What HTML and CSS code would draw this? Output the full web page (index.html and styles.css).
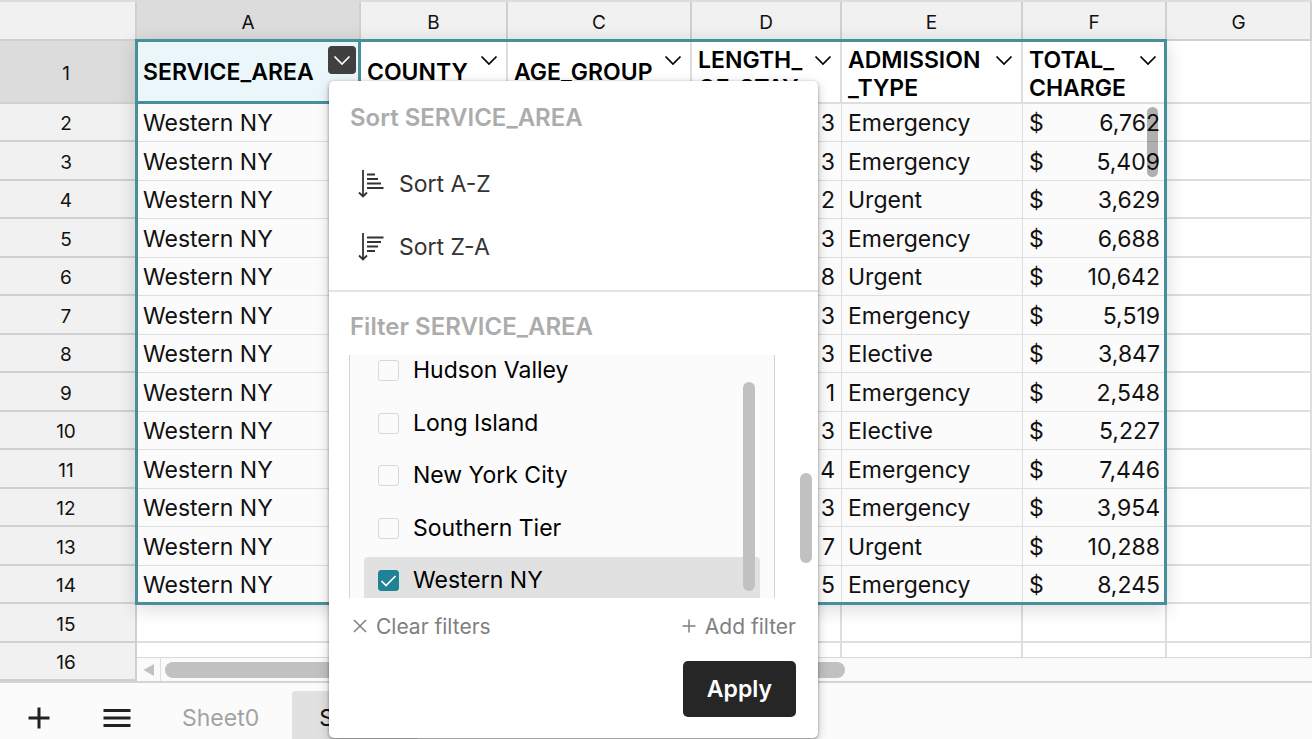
FILE: index.html
```html
<!DOCTYPE html>
<html lang="en">
<head>
    <meta charset="UTF-8">
    <meta name="viewport" content="width=device-width, initial-scale=1.0">
    <title>Hospital charges</title>
    <link rel="stylesheet" href="styles.css">
</head>
<body>
    <svg class="sprite" aria-hidden="true">
        <symbol id="chevron" viewBox="0 0 28 28">
            <path d="M6.5 10.5 L14 18 L21.5 10.5" fill="none" stroke="currentColor" stroke-width="1.7"/>
        </symbol>
    </svg>

    <div class="app">
        <main class="sheet">
            <table class="grid">
                <colgroup>
                    <col class="col-num"><col class="col-a"><col class="col-b"><col class="col-c">
                    <col class="col-d"><col class="col-e"><col class="col-f"><col>
                </colgroup>
                <thead>
                    <tr>
                        <th></th><th class="current">A</th><th>B</th><th>C</th><th>D</th><th>E</th><th>F</th><th>G</th>
                    </tr>
                </thead>
                <tbody>
                    <tr class="fields">
                        <th class="current">1</th>
                        <td class="active">SERVICE_AREA<button class="drop open" aria-label="Filter SERVICE_AREA"><svg><use href="#chevron"/></svg></button></td>
                        <td>COUNTY<button class="drop" aria-label="Filter COUNTY"><svg><use href="#chevron"/></svg></button></td>
                        <td>AGE_GROUP<button class="drop" aria-label="Filter AGE_GROUP"><svg><use href="#chevron"/></svg></button></td>
                        <td class="wrapped">LENGTH_<br>OF_STAY<button class="drop" aria-label="Filter LENGTH_OF_STAY"><svg><use href="#chevron"/></svg></button></td>
                        <td class="wrapped">ADMISSION<br>_TYPE<button class="drop" aria-label="Filter ADMISSION_TYPE"><svg><use href="#chevron"/></svg></button></td>
                        <td class="wrapped">TOTAL_<br>CHARGE<button class="drop" aria-label="Filter TOTAL_CHARGE"><svg><use href="#chevron"/></svg></button></td>
                        <td></td>
                    </tr>
                    <tr class="data"><th>2</th><td>Western NY</td><td></td><td></td><td class="num">3</td><td>Emergency</td><td><div class="money"><span>$</span><span>6,762</span></div></td><td></td></tr>
                    <tr class="data"><th>3</th><td>Western NY</td><td></td><td></td><td class="num">3</td><td>Emergency</td><td><div class="money"><span>$</span><span>5,409</span></div></td><td></td></tr>
                    <tr class="data"><th>4</th><td>Western NY</td><td></td><td></td><td class="num">2</td><td>Urgent</td><td><div class="money"><span>$</span><span>3,629</span></div></td><td></td></tr>
                    <tr class="data"><th>5</th><td>Western NY</td><td></td><td></td><td class="num">3</td><td>Emergency</td><td><div class="money"><span>$</span><span>6,688</span></div></td><td></td></tr>
                    <tr class="data"><th>6</th><td>Western NY</td><td></td><td></td><td class="num">8</td><td>Urgent</td><td><div class="money"><span>$</span><span>10,642</span></div></td><td></td></tr>
                    <tr class="data"><th>7</th><td>Western NY</td><td></td><td></td><td class="num">3</td><td>Emergency</td><td><div class="money"><span>$</span><span>5,519</span></div></td><td></td></tr>
                    <tr class="data"><th>8</th><td>Western NY</td><td></td><td></td><td class="num">3</td><td>Elective</td><td><div class="money"><span>$</span><span>3,847</span></div></td><td></td></tr>
                    <tr class="data"><th>9</th><td>Western NY</td><td></td><td></td><td class="num">1</td><td>Emergency</td><td><div class="money"><span>$</span><span>2,548</span></div></td><td></td></tr>
                    <tr class="data"><th>10</th><td>Western NY</td><td></td><td></td><td class="num">3</td><td>Elective</td><td><div class="money"><span>$</span><span>5,227</span></div></td><td></td></tr>
                    <tr class="data"><th>11</th><td>Western NY</td><td></td><td></td><td class="num">4</td><td>Emergency</td><td><div class="money"><span>$</span><span>7,446</span></div></td><td></td></tr>
                    <tr class="data"><th>12</th><td>Western NY</td><td></td><td></td><td class="num">3</td><td>Emergency</td><td><div class="money"><span>$</span><span>3,954</span></div></td><td></td></tr>
                    <tr class="data"><th>13</th><td>Western NY</td><td></td><td></td><td class="num">7</td><td>Urgent</td><td><div class="money"><span>$</span><span>10,288</span></div></td><td></td></tr>
                    <tr class="data"><th>14</th><td>Western NY</td><td></td><td></td><td class="num">5</td><td>Emergency</td><td><div class="money"><span>$</span><span>8,245</span></div></td><td></td></tr>
                    <tr><th>15</th><td></td><td></td><td></td><td></td><td></td><td></td><td></td></tr>
                    <tr><th>16</th><td></td><td></td><td></td><td></td><td></td><td></td><td></td></tr>
                </tbody>
            </table>

            <!-- Outline of the filtered range -->
            <div class="range"><div class="range-thumb"></div></div>

            <div class="hscroll">
                <button class="hscroll-arrow" aria-label="Scroll left">
                    <svg viewBox="0 0 12 12"><path d="M0.5 6 L11 0 V12 Z" fill="#c1c1c1"/></svg>
                </button>
                <div class="hscroll-thumb"></div>
            </div>
        </main>

        <nav class="tabs">
            <button class="icon-btn" aria-label="Add sheet">
                <svg width="22" height="22" viewBox="0 0 22 22"><path d="M11 0.5 V21.5 M0.5 11 H21.5" stroke="#222" stroke-width="3"/></svg>
            </button>
            <button class="icon-btn" aria-label="All sheets">
                <svg width="28" height="20" viewBox="0 0 28 20"><path d="M0.5 2.5 H27.5 M0.5 10 H27.5 M0.5 17.5 H27.5" stroke="#222" stroke-width="3"/></svg>
            </button>
            <button class="tab">Sheet0</button>
            <button class="tab selected">Sheet1</button>
        </nav>

        <!-- Sort and filter menu -->
        <div class="menu">
            <section class="menu-sort">
                <h2>Sort SERVICE_AREA</h2>
                <button class="sort-item">
                    <svg width="26" height="28" viewBox="0 0 26 28" fill="none" stroke="#333" stroke-width="1.8">
                        <path d="M5 0 V26.5 M1 22.5 L5 26.5 L9 22.5"/>
                        <path d="M9 4.5 H17 M9 9 H20 M9 13.5 H23 M9 18 H25.5"/>
                    </svg>
                    Sort A-Z
                </button>
                <button class="sort-item">
                    <svg width="26" height="28" viewBox="0 0 26 28" fill="none" stroke="#333" stroke-width="1.8">
                        <path d="M5 0 V26.5 M1 22.5 L5 26.5 L9 22.5"/>
                        <path d="M9 4.5 H25.5 M9 9 H23 M9 13.5 H20 M9 18 H17"/>
                    </svg>
                    Sort Z-A
                </button>
            </section>
            <section class="menu-filter">
                <h2>Filter SERVICE_AREA</h2>
                <div class="options">
                    <label class="option"><input type="checkbox">Hudson Valley</label>
                    <label class="option"><input type="checkbox">Long Island</label>
                    <label class="option"><input type="checkbox">New York City</label>
                    <label class="option"><input type="checkbox">Southern Tier</label>
                    <label class="option checked"><input type="checkbox" checked>Western NY</label>
                    <div class="options-thumb"></div>
                </div>
                <div class="menu-actions">
                    <button class="link-btn">
                        <svg width="14" height="14" viewBox="0 0 14 14"><path d="M1 1 L13 13 M13 1 L1 13" stroke="currentColor" stroke-width="1.5"/></svg>
                        Clear filters
                    </button>
                    <button class="link-btn">
                        <svg width="14" height="14" viewBox="0 0 14 14"><path d="M7 0.5 V13.5 M0.5 7 H13.5" stroke="currentColor" stroke-width="1.5"/></svg>
                        Add filter
                    </button>
                </div>
                <button class="apply">Apply</button>
            </section>
            <div class="menu-thumb"></div>
        </div>
    </div>
</body>
</html>
```

FILE: styles.css
```css
* {
    margin: 0;
    padding: 0;
    box-sizing: border-box;
}

body {
    font-family: Inter, "Liberation Sans", sans-serif;
    font-size: 23px;
    color: #111;
    background: #fbfbfb;
    overflow: hidden;
}

button {
    font: inherit;
    color: inherit;
    background: none;
    border: none;
    cursor: pointer;
}

.sprite {
    display: none;
}

.app {
    position: relative;
    display: flex;
    flex-direction: column;
    min-height: 100vh;
}

/* Grid */
.sheet {
    position: relative;
    border-top: 2px solid #dcdcdc;
    border-bottom: 2px solid #d4d4d4;
}

.grid {
    width: 100%;
    table-layout: fixed;
    border-collapse: separate;
    border-spacing: 0;
    background: #fff;
}

.col-num { width: 137px; }
.col-a { width: 224px; }
.col-b { width: 147px; }
.col-c { width: 184px; }
.col-d { width: 150px; }
.col-e { width: 181px; }
.col-f { width: 144px; }

.grid tr {
    height: 39px;
}

.grid tbody tr:nth-child(even) {
    height: 38px;
}

.grid th {
    padding-top: 4px;
    font-size: 19px;
    font-weight: 400;
    line-height: 24px;
    background: #f1f1f1;
    border-right: 2px solid #d0d0d0;
    border-bottom: 2px solid #d0d0d0;
}

.grid tbody th {
    padding-right: 3px;
}

.grid th.current {
    background: #dcdcdc;
}

.grid td {
    padding: 2px 6px 0;
    line-height: 29px;
    white-space: nowrap;
    border-right: 2px solid #dedede;
    border-bottom: 2px solid #dedede;
}

.grid tbody .fields {
    height: 63px;
}

.grid .fields td {
    position: relative;
    font-weight: 600;
    color: #000;
}

.grid .fields .wrapped {
    padding-top: 5px;
    line-height: 28px;
}

.fields .active {
    background: #eaf6f9;
}

.fields .active::after {
    content: "";
    position: absolute;
    inset: -2px;
    border: 3px solid #488f9c;
}

.data td:not(:last-child) {
    background: #fbfbfb;
    border-width: 0 1px 1px 0;
}

.num {
    text-align: right;
}

.money {
    display: flex;
    justify-content: space-between;
}

.drop {
    position: absolute;
    z-index: 1;
    top: 5px;
    right: 3px;
    width: 28px;
    height: 28px;
    border-radius: 4px;
}

.drop svg {
    display: block;
    width: 28px;
    height: 28px;
}

.drop.open {
    color: #fff;
    background: #404040;
}

.range {
    position: absolute;
    top: 37px;
    left: 135px;
    width: 1032px;
    height: 566px;
    border: 3px solid #488f9c;
    box-shadow: 0 4px 18px rgba(0, 0, 0, 0.15);
    pointer-events: none;
}

.range-thumb {
    position: absolute;
    top: 65px;
    right: 6px;
    width: 11px;
    height: 70px;
    border-radius: 6px;
    background: rgba(0, 0, 0, 0.3);
}

.hscroll {
    position: absolute;
    left: 137px;
    right: 0;
    bottom: 0;
    height: 24px;
    display: flex;
    align-items: center;
    background: #fafafa;
    border-top: 1px solid #d8d8d8;
}

.hscroll-arrow {
    display: flex;
    align-items: center;
    justify-content: center;
    width: 24px;
    height: 23px;
    border-right: 1px solid #dedede;
}

.hscroll-arrow svg {
    width: 12px;
    height: 12px;
}

.hscroll-thumb {
    width: 680px;
    height: 16px;
    margin-left: 4px;
    border-radius: 8px;
    background: #c1c1c1;
}

/* Sheet tabs */
.tabs {
    flex: 1;
    display: flex;
    align-items: stretch;
    padding: 8px 0 0 28px;
}

.icon-btn {
    display: flex;
    align-items: center;
    margin-right: 53px;
    padding-top: 6px;
}

.icon-btn + .icon-btn {
    margin-right: 24px;
}

.tab {
    padding: 6px 27px 0;
    color: #a3a3a3;
}

.tab.selected {
    color: #111;
    background: #e1e1e1;
    border-radius: 4px 4px 0 0;
    margin-left: 6px;
}

/* Sort and filter menu */
.menu {
    position: absolute;
    top: 81px;
    left: 329px;
    width: 489px;
    background: #fff;
    border-radius: 5px;
    box-shadow: 0 1px 3px rgba(0, 0, 0, 0.4), 0 3px 12px rgba(0, 0, 0, 0.2);
}

.menu h2 {
    font-size: 24px;
    font-weight: 600;
    line-height: 32px;
    color: #acacac;
}

.menu-sort {
    padding: 21px 21px 12px;
    border-bottom: 2px solid #e4e4e4;
}

.menu-sort h2 {
    margin-bottom: 18px;
}

.sort-item {
    display: flex;
    align-items: center;
    gap: 15px;
    width: 100%;
    height: 63px;
    padding-left: 8px;
    color: #333;
}

.menu-filter {
    padding: 19px 22px 21px 20px;
}

.menu-filter h2 {
    padding-left: 1px;
    margin-bottom: 12px;
}

.options {
    position: relative;
    height: 243px;
    margin-right: 21px;
    padding: 0 14px;
    overflow: hidden;
    background: #fbfbfb;
    border: solid #d4d4d4;
    border-width: 0 1px;
}

.option {
    display: flex;
    align-items: center;
    gap: 14px;
    height: 46px;
    margin-bottom: 6px;
    padding-left: 14px;
    color: #000;
    border-radius: 4px;
}

.option:nth-child(odd) {
    margin-bottom: 7px;
}

.option:first-child {
    margin-top: -8px;
}

.option.checked {
    background: #e1e1e1;
}

.option input {
    appearance: none;
    width: 21px;
    height: 21px;
    border: 1px solid #d8d8d8;
    border-radius: 3px;
}

.option input:checked {
    border-color: #1f8295;
    background: #1f8295 url("data:image/svg+xml,%3Csvg xmlns='http://www.w3.org/2000/svg' viewBox='0 0 19 19'%3E%3Cpath d='M2.5 10 L7 14.5 L16.5 5' fill='none' stroke='white' stroke-width='1.7'/%3E%3C/svg%3E");
}

.options-thumb,
.menu-thumb {
    position: absolute;
    width: 12px;
    border-radius: 6px;
    background: #c1c1c1;
}

.options-thumb {
    top: 27px;
    right: 19px;
    height: 209px;
}

.menu-thumb {
    top: 392px;
    right: 6px;
    height: 90px;
}

.menu-actions {
    display: flex;
    justify-content: space-between;
    height: 56px;
    padding-left: 4px;
}

.link-btn {
    display: flex;
    align-items: center;
    gap: 9px;
    font-size: 21px;
    color: #808080;
}

.apply {
    display: block;
    height: 56px;
    margin: 7px 0 0 auto;
    padding: 0 24px;
    font-weight: 600;
    color: #fff;
    background: #262626;
    border-radius: 5px;
}
```
